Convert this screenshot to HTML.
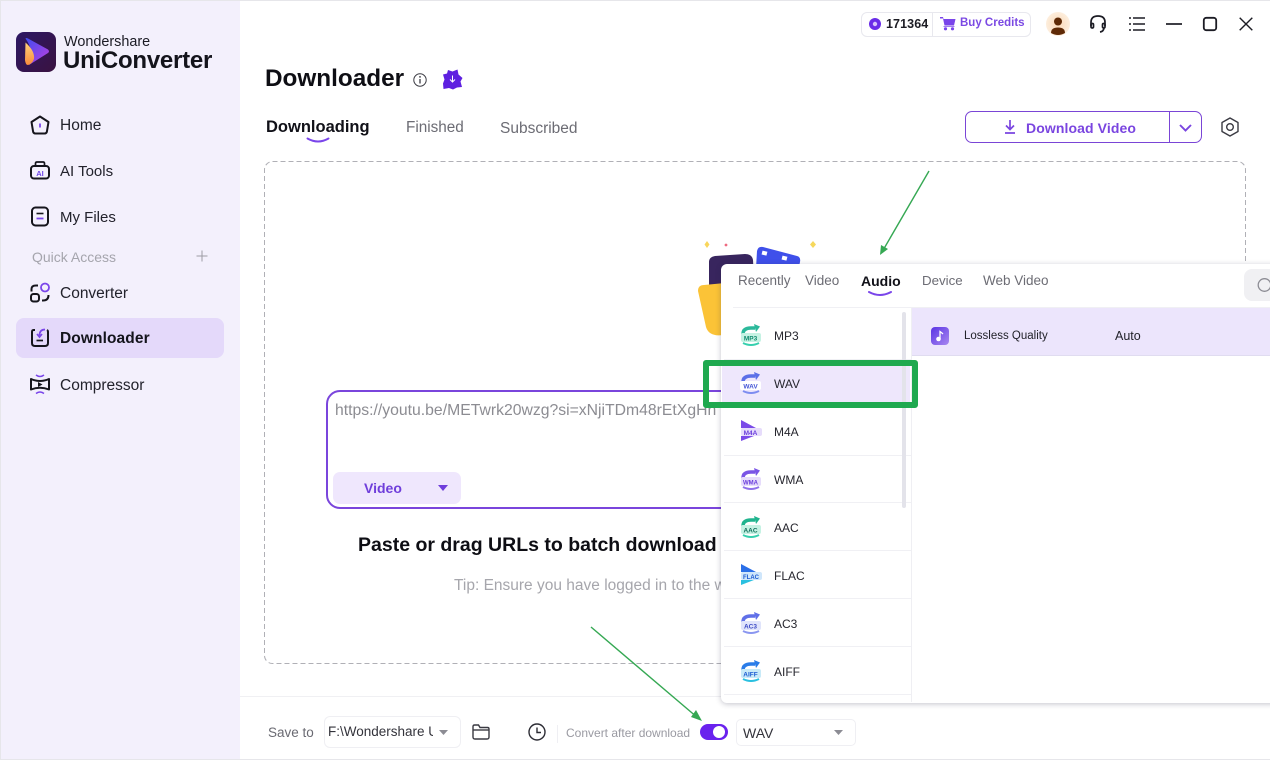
<!DOCTYPE html>
<html>
<head>
<meta charset="utf-8">
<style>
html,body{margin:0;padding:0;width:1270px;height:760px;overflow:hidden;background:#fff}
body{font-family:"Liberation Sans","Noto Sans CJK SC",sans-serif;color:#1b1b24;position:relative}
.t{position:absolute;white-space:nowrap;line-height:20px}
.a{position:absolute}
svg{position:absolute;overflow:visible}
.nav{font-size:15.5px;color:#22222c}
.fmt{font-size:12px;color:#26262e;left:774px}
.sep{position:absolute;left:724px;width:187px;height:1px;background:#f0f0f4}
</style>
</head>
<body>
<!-- sidebar -->
<div class="a" style="left:0;top:0;width:240px;height:760px;background:#f3f0fc"></div>
<div class="a" style="left:0;top:0;width:1270px;height:1px;background:#e6e6ea"></div>
<div class="a" style="left:0;top:0;width:1px;height:760px;background:#e6e6ea"></div>
<div class="a" style="left:0;top:759px;width:1270px;height:1px;background:#e6e6ea"></div>

<!-- logo -->
<svg style="left:16px;top:32px" width="40" height="40" viewBox="0 0 40 40">
<defs>
<linearGradient id="lb" x1="0" y1="0" x2="1" y2="1"><stop offset="0" stop-color="#2c1764"/><stop offset="1" stop-color="#3a1240"/></linearGradient>
<linearGradient id="lp" x1="0" y1="0" x2="1" y2="1"><stop offset="0" stop-color="#3f4cf0"/><stop offset="1" stop-color="#c040e0"/></linearGradient>
<linearGradient id="lo" x1="0" y1="0" x2="0" y2="1"><stop offset="0" stop-color="#ffd27a"/><stop offset="1" stop-color="#f98a3c"/></linearGradient>
</defs>
<rect width="40" height="40" rx="8" fill="url(#lb)"/>
<path d="M9.500 6.500Q10 5.500 12 6.500L32 17.500Q34 19.500 32 21L13 33Q19 20 9.500 6.500Z" fill="url(#lp)"/>
<path d="M9.500 10.500Q19 19 18 27Q16 32 12 33Q9.500 33 9 28Z" fill="url(#lo)"/>
</svg>
<div class="t" style="left:64px;top:31px;font-size:14.400px;color:#1b1b24;margin-top:1px">Wondershare</div>
<div class="t" style="left:63px;top:51px;font-size:24px;font-weight:700;color:#14141c;letter-spacing:-.25px">UniConverter</div>

<!-- nav icons -->
<svg style="left:30px;top:115px" width="20" height="20" viewBox="0 0 20 20" fill="none">
<path d="M10 1.500 L18.500 7 L17 16 Q16.800 18.500 14.500 18.500 H5.500 Q3.200 18.500 3 16 L1.500 7Z" stroke="#15151c" stroke-width="2" stroke-linejoin="round"/>
<path d="M10 8.500V12.500" stroke="#7a45ea" stroke-width="1.800"/>
</svg>
<div class="t nav" style="left:60px;top:116px">Home</div>

<svg style="left:30px;top:160px" width="20" height="20" viewBox="0 0 20 20" fill="none">
<rect x="1" y="6" width="18" height="12.500" rx="3" stroke="#15151c" stroke-width="2"/>
<path d="M5.500 6V3.500Q5.500 2 7 2H13Q14.500 2 14.500 3.500V6" stroke="#15151c" stroke-width="1.700"/>
<text x="10" y="16" text-anchor="middle" font-size="7.500" font-weight="700" fill="#6e44e6" font-family="Liberation Sans">AI</text>
</svg>
<div class="t nav" style="left:60px;top:162px;font-size:15px">AI Tools</div>

<svg style="left:30px;top:206px" width="20" height="20" viewBox="0 0 20 20" fill="none">
<rect x="2" y="1.500" width="16" height="18" rx="3.500" stroke="#15151c" stroke-width="2"/>
<path d="M6.500 7.500H13.500" stroke="#15151c" stroke-width="1.600"/>
<path d="M6.500 12.500H13.500" stroke="#7a45ea" stroke-width="1.800"/>
</svg>
<div class="t nav" style="left:60px;top:208px;font-size:15px">My Files</div>

<div class="t" style="left:32px;top:247px;font-size:14px;color:#a5a5ad">Quick Access</div>
<svg style="left:196px;top:250px" width="12" height="12" viewBox="0 0 12 12" fill="none"><path d="M6 .5V11.500M.5 6H11.500" stroke="#9c9ca4" stroke-width="1"/></svg>

<svg style="left:30px;top:282px" width="21" height="21" viewBox="0 0 21 21" fill="none">
<circle cx="15" cy="5.500" r="4" stroke="#7a45ea" stroke-width="1.800"/>
<rect x="1" y="12" width="8" height="7.500" rx="2.500" stroke="#15151c" stroke-width="2"/>
<path d="M1.500 9.500V7Q1.500 3.500 6 3.500H8" stroke="#15151c" stroke-width="2"/>
<path d="M18.500 13Q18.500 18.500 13 18.500H12" stroke="#15151c" stroke-width="2"/>
</svg>
<div class="t nav" style="left:60px;top:284px">Converter</div>

<div class="a" style="left:16px;top:318px;width:208px;height:40px;background:#e4d9fa;border-radius:8px"></div>
<svg style="left:30px;top:328px" width="20" height="20" viewBox="0 0 20 20" fill="none">
<path d="M5 2H3.500Q2 2 2 4V15Q2 18 5 18H15Q18 18 18 15V4Q18 2.500 17 2" stroke="#15151c" stroke-width="2"/>
<path d="M15 1.500Q9.500 1.500 9.500 7.500" stroke="#7a45ea" stroke-width="1.700"/>
<path d="M7 6L9.500 9L12 6" stroke="#7a45ea" stroke-width="1.700"/>
<path d="M6.500 12.500H13" stroke="#15151c" stroke-width="1.700"/>
</svg>
<div class="t" style="left:60px;top:329px;font-size:15.500px;font-weight:700;color:#14141c;letter-spacing:.1px">Downloader</div>

<svg style="left:30px;top:374px" width="20" height="21" viewBox="0 0 20 21" fill="none">
<path d="M1 5Q10 9 19 5V15.500Q10 12 1 15.500Z" stroke="#15151c" stroke-width="2" stroke-linejoin="round"/>
<path d="M8 8L12.500 10.500L8 13Z" fill="#15151c"/>
<path d="M6 1Q10 4 14 1M6 19.500Q10 16.500 14 19.500" stroke="#7a45ea" stroke-width="1.500"/>
</svg>
<div class="t nav" style="left:60px;top:376px">Compressor</div>

<!-- top bar -->
<div class="a" style="left:861px;top:12px;width:168px;height:23px;border:1px solid #e8e8ee;border-radius:6px"></div>
<div class="a" style="left:932px;top:13px;width:1px;height:23px;background:#e8e8ee"></div>
<svg style="left:869px;top:18px" width="12" height="12" viewBox="0 0 12 12"><circle cx="6" cy="6" r="6" fill="#6a2de8"/><circle cx="6" cy="6" r="2.200" fill="#d8c4fb"/></svg>
<div class="t" style="left:886px;top:14px;font-size:12.500px;font-weight:700;color:#1c1c24;letter-spacing:.1px">171364</div>
<svg style="left:940px;top:16px" width="16" height="15" viewBox="0 0 16 15" fill="#7a45ea">
<path d="M0 1H3L3.500 3H15.500L14 9.500H4.500L3 2.500H0Z"/><circle cx="5.500" cy="12.800" r="1.600"/><circle cx="12.500" cy="12.800" r="1.600"/><path d="M3.500 10.300H14.500V11H3.500Z"/>
</svg>
<div class="t" style="left:960px;top:13px;font-size:11.500px;font-weight:700;color:#7b49e3">Buy Credits</div>

<svg style="left:1046px;top:12px" width="24" height="24" viewBox="0 0 24 24">
<defs><radialGradient id="av"><stop offset="0" stop-color="#fbd9b8"/><stop offset="1" stop-color="#fdeedd"/></radialGradient></defs>
<circle cx="12" cy="12" r="12" fill="url(#av)"/><circle cx="12" cy="9.500" r="4" fill="#5f2a06"/><path d="M5 21Q5 15.500 12 15.500Q19 15.500 19 21Q12 25 5 21Z" fill="#5f2a06"/>
</svg>

<svg style="left:1090px;top:15px" width="16" height="18" viewBox="0 0 16 18" fill="none" stroke="#1c1c24" stroke-width="1.700">
<path d="M1 11V7.500Q1 1 8 1Q15 1 15 7.500V11"/><rect x="1" y="8.500" width="2.500" height="4.500" rx="1.200"/><rect x="12.500" y="8.500" width="2.500" height="4.500" rx="1.200"/><path d="M14 13Q13.500 16.500 10 17"/>
</svg>
<svg style="left:1129px;top:16px" width="16" height="16" viewBox="0 0 16 16" fill="none" stroke="#1c1c24" stroke-width="1.500">
<path d="M4 2H16M4 8H16M4 14H16"/><path d="M0 2H2M0 8H2M0 14H2"/>
</svg>
<svg style="left:1166px;top:23px" width="16" height="2" viewBox="0 0 16 2"><path d="M0 1H16" stroke="#1c1c24" stroke-width="1.700"/></svg>
<svg style="left:1203px;top:17px" width="14" height="14" viewBox="0 0 14 14" fill="none"><rect x=".8" y=".8" width="12.400" height="12.400" rx="2.500" stroke="#1c1c24" stroke-width="1.800"/></svg>
<svg style="left:1239px;top:17px" width="14" height="14" viewBox="0 0 14 14" fill="none"><path d="M.7 .7L13.300 13.300M13.300 .7L.7 13.300" stroke="#1c1c24" stroke-width="1.400"/></svg>

<!-- title -->
<div class="t" style="left:265px;top:67px;font-size:24.300px;line-height:24px;font-weight:700;color:#0e0e14">Downloader</div>
<svg style="left:413px;top:73px" width="14" height="14" viewBox="0 0 14 14" fill="none"><circle cx="7" cy="7" r="6.200" stroke="#3c3c44" stroke-width="1"/><path d="M7 6V10.500" stroke="#3c3c44" stroke-width="1.300"/><circle cx="7" cy="3.900" r=".9" fill="#3c3c44"/></svg>
<svg style="left:442px;top:69px" width="21" height="21" viewBox="0 0 21 21">
<path d="M6 1L10.500 2.500L15.500 0.500L16.500 5.500L20.500 9L18.500 12.500L20 18L15 18.500L11 20.500L7 19L1.500 20L1 14.500L2.500 10.500L1 5.500L5 4.500Z" fill="#5e20e0"/>
<path d="M10.500 6.500V13M8 10.500L10.500 13L13 10.500" stroke="#fff" stroke-width="1" fill="none"/>
</svg>

<!-- tabs -->
<div class="t" style="left:266px;top:117px;font-size:16.500px;font-weight:700;color:#111118">Downloading</div>
<svg style="left:306px;top:137px" width="24" height="7" viewBox="0 0 24 7" fill="none"><path d="M1.500 1.500Q12 7.500 22.500 1.500" stroke="#7a45ea" stroke-width="2" stroke-linecap="round"/></svg>
<div class="t" style="left:406px;top:118px;font-size:15.300px;color:#6c6c74">Finished</div>
<div class="t" style="left:500px;top:119px;font-size:15.500px;color:#6c6c74">Subscribed</div>

<!-- download btn -->
<div class="a" style="left:965px;top:111px;width:235px;height:30px;border:1px solid #7a45d6;border-radius:7px"></div>
<div class="a" style="left:1169px;top:112px;width:1px;height:30px;background:#7a45d6"></div>
<svg style="left:1004px;top:120px" width="12" height="14" viewBox="0 0 12 14" fill="none" stroke="#7a45e0" stroke-width="1.700"><path d="M6 0V9M2 5.500L6 9.500L10 5.500M1 13H11"/></svg>
<div class="t" style="left:1026px;top:118px;font-size:14px;font-weight:700;color:#7a45e0;letter-spacing:.1px">Download Video</div>
<svg style="left:1179px;top:124px" width="13" height="8" viewBox="0 0 13 8" fill="none"><path d="M1 1L6.500 6.500L12 1" stroke="#7a45e0" stroke-width="1.900"/></svg>
<svg style="left:1221px;top:117px" width="18" height="20" viewBox="0 0 18 20" fill="none" stroke="#3a3a42" stroke-width="1.400"><path d="M9 1L17 5.500V14.500L9 19L1 14.500V5.500Z" stroke-linejoin="round"/><circle cx="9" cy="10" r="3.300"/></svg>

<!-- dashed area -->
<svg style="left:264px;top:161px" width="982" height="503" viewBox="0 0 982 503" fill="none"><rect x=".5" y=".5" width="981" height="502" rx="8" stroke="#b0b0b6" stroke-width="1" stroke-dasharray="5 3"/></svg>

<!-- illustration -->
<svg style="left:695px;top:236px" width="130" height="110" viewBox="0 0 130 110">
<path d="M12 5L14.500 8.500L12 12L9.500 8.500Z" fill="#f9d65b"/>
<circle cx="31" cy="9" r="1.400" fill="#ee6a80"/>
<path d="M118 5L121 8.500L118 12L115 8.500Z" fill="#f6d85c"/>
<path d="M62 15Q63 10 68 11L102 20Q106 21 105 26L100 50H60Z" fill="#3f50ea"/>
<rect x="67" y="15" width="5" height="4" fill="#fff" transform="rotate(14 69 17)"/>
<rect x="87" y="20" width="5" height="4" fill="#fff" transform="rotate(14 89 22)"/>
<path d="M14 26Q14 21 20 20L50 18Q57 18 58 24L60 60H14Z" fill="#38255e"/>
<path d="M3 55Q3 49 9 49L30 47L28 99Q14 101 11 91Z" fill="#fbc337"/>
</svg>

<!-- url input -->
<div class="a" style="left:326px;top:390px;width:500px;height:115px;border:2px solid #7a45dc;border-radius:14px"></div>
<div class="t" style="left:335px;top:401px;font-size:15.750px;color:#8c8c92;width:382px;overflow:hidden">https://youtu.be/METwrk20wzg?si=xNjiTDm48rEtXgHn</div>
<div class="a" style="left:333px;top:472px;width:128px;height:32px;background:#efe7fd;border-radius:7px"></div>
<div class="t" style="left:364px;top:478px;font-size:14px;font-weight:700;color:#6f3edb">Video</div>
<svg style="left:438px;top:485px" width="10" height="6" viewBox="0 0 10 6"><path d="M0 0H10L5 6Z" fill="#6f3edb"/></svg>

<div class="t" style="left:358px;top:534px;font-size:19.500px;line-height:22px;font-weight:700;color:#0e0e14">Paste or drag URLs to batch download</div>
<div class="t" style="left:454px;top:576px;font-size:15.500px;color:#a6a6ac">Tip: Ensure you have logged in to the w</div>

<!-- bottom bar -->
<div class="a" style="left:240px;top:696px;width:1030px;height:1px;background:#f0f0f3"></div>
<div class="t" style="left:268px;top:723px;font-size:13.500px;color:#6a6a72">Save to</div>
<div class="a" style="left:324px;top:716px;width:135px;height:30px;border:1px solid #efeff3;border-radius:6px"></div>
<div class="t" style="left:328px;top:722px;font-size:13.500px;color:#33333b;width:105px;overflow:hidden">F:\Wondershare UniConverter</div>
<svg style="left:439px;top:730px" width="9" height="5" viewBox="0 0 9 5"><path d="M0 0H9L4.500 5Z" fill="#8c8c94"/></svg>
<svg style="left:472px;top:724px" width="18" height="16" viewBox="0 0 18 16" fill="none" stroke="#3a3a42" stroke-width="1.400"><path d="M1 13V2.500Q1 1 2.500 1H6.500L8 3.500H15.500Q17 3.500 17 5V13Q17 15 15 15H3Q1 15 1 13Z"/><path d="M1 6H17"/></svg>
<svg style="left:528px;top:723px" width="18" height="18" viewBox="0 0 18 18" fill="none" stroke="#2c2c34" stroke-width="1.400"><circle cx="9" cy="9" r="8"/><path d="M9 4.500V9.500H13"/></svg>
<div class="a" style="left:557px;top:725px;width:1px;height:18px;background:#efeff3"></div>
<div class="t" style="left:566px;top:723px;font-size:12px;color:#9a9aa2">Convert after download</div>
<div class="a" style="left:700px;top:724px;width:28px;height:16px;background:#6a22ee;border-radius:8px"></div>
<div class="a" style="left:713px;top:726px;width:12px;height:12px;background:#fff;border-radius:50%"></div>
<div class="a" style="left:736px;top:719px;width:118px;height:25px;border:1px solid #efeff3;border-radius:5px"></div>
<div class="t" style="left:743px;top:723px;font-size:14px;color:#33333b">WAV</div>
<svg style="left:834px;top:730px" width="9" height="5" viewBox="0 0 9 5"><path d="M0 0H9L4.500 5Z" fill="#8c8c94"/></svg>

<!-- popup -->
<div class="a" style="left:721px;top:264px;width:600px;height:439px;background:#fff;border-radius:6px;box-shadow:0 1px 6px rgba(40,40,70,.28)"></div>
<div class="t" style="left:738px;top:271px;font-size:13.500px;color:#6c6c74">Recently</div>
<div class="t" style="left:805px;top:271px;font-size:13.500px;color:#6c6c74">Video</div>
<div class="t" style="left:861px;top:271px;font-size:14px;font-weight:700;color:#111118">Audio</div>
<svg style="left:867px;top:290px" width="26" height="8" viewBox="0 0 26 8" fill="none"><path d="M2 2Q13 8 24 2" stroke="#7a45ea" stroke-width="2" stroke-linecap="round"/></svg>
<div class="t" style="left:922px;top:271px;font-size:13.300px;color:#6c6c74">Device</div>
<div class="t" style="left:983px;top:271px;font-size:13.500px;color:#6c6c74">Web Video</div>
<div class="a" style="left:1244px;top:269px;width:40px;height:32px;background:#f0f0f3;border-radius:8px"></div>
<svg style="left:1257px;top:278px" width="16" height="16" viewBox="0 0 16 16" fill="none"><circle cx="7.500" cy="7" r="6.300" stroke="#8c8c94" stroke-width="1.300"/></svg>
<div class="a" style="left:733px;top:307px;width:537px;height:1px;background:#f0f0f4"></div>
<div class="a" style="left:911px;top:308px;width:1px;height:394px;background:#efeff3"></div>

<!-- right pane row -->
<div class="a" style="left:912px;top:308px;width:358px;height:47px;background:#ece5fc"></div>
<div class="a" style="left:912px;top:355px;width:358px;height:1px;background:#e0dcf0"></div>
<svg style="left:931px;top:327px" width="18" height="18" viewBox="0 0 18 18">
<defs><linearGradient id="mu" x1="0" y1="0" x2="1" y2="1"><stop offset="0" stop-color="#5a34e4"/><stop offset="1" stop-color="#a888f0"/></linearGradient></defs>
<rect width="18" height="18" rx="4" fill="url(#mu)"/><circle cx="7.500" cy="12" r="2.300" fill="#fff"/><path d="M9 12V4.500Q11 6 12 7" stroke="#fff" stroke-width="1.300" fill="none"/>
</svg>
<div class="t" style="left:964px;top:326px;font-size:11.500px;color:#22222a">Lossless Quality</div>
<div class="t" style="left:1115px;top:326px;font-size:12.500px;color:#22222a">Auto</div>

<!-- format list -->
<div class="a" style="left:722px;top:360px;width:188px;height:47px;background:#eee7fc"></div>
<div class="sep" style="top:359px"></div><div class="sep" style="top:407px"></div><div class="sep" style="top:455px"></div><div class="sep" style="top:502px"></div><div class="sep" style="top:550px"></div><div class="sep" style="top:598px"></div><div class="sep" style="top:646px"></div><div class="sep" style="top:694px"></div>
<div class="a" style="left:902px;top:312px;width:4px;height:196px;background:#e3e3ea;border-radius:2px"></div>

<!-- icons -->
<svg style="left:740px;top:323px" width="22" height="24" viewBox="0 0 22 24" fill="none"><path d="M3 11Q3 5 11 5L15 5" stroke="#2bb99b" stroke-width="3.500"/><path d="M14 1L20 3.500L16 9Z" fill="#2bb99b"/><rect x="1" y="10" width="20" height="9" rx="2" fill="#c5f2e3"/><text x="10.500" y="17.500" text-anchor="middle" font-size="6.500" font-weight="700" fill="#0e8a6e" font-family="Liberation Sans">MP3</text><path d="M3 20Q11 24 19 20" stroke="#36d0ae" stroke-width="2"/></svg>
<div class="t fmt" style="top:326px">MP3</div>

<svg style="left:740px;top:371px" width="22" height="24" viewBox="0 0 22 24" fill="none"><path d="M3 11Q3 5 11 5L15 5" stroke="#5b6fe8" stroke-width="3.500"/><path d="M14 1L20 3.500L16 9Z" fill="#5b6fe8"/><rect x="0" y="10" width="21" height="9" rx="2" fill="#fff"/><text x="10.500" y="17.500" text-anchor="middle" font-size="6.500" font-weight="700" fill="#4556d6" font-family="Liberation Sans">WAV</text><path d="M3 20Q11 24 19 20" stroke="#7d8cf0" stroke-width="2"/></svg>
<div class="t fmt" style="top:374px">WAV</div>

<svg style="left:740px;top:419px" width="22" height="24" viewBox="0 0 22 24" fill="none"><path d="M1 1L16 9H1Z" fill="#7a4ae8"/><path d="M1 22L14 17H1Z" fill="#7a4ae8"/><rect x="1" y="9" width="21" height="8" rx="2" fill="#e6dcfb"/><text x="10.500" y="15.800" text-anchor="middle" font-size="6.500" font-weight="700" fill="#6a3ddc" font-family="Liberation Sans">M4A</text></svg>
<div class="t fmt" style="top:422px">M4A</div>

<svg style="left:740px;top:467px" width="22" height="24" viewBox="0 0 22 24" fill="none"><path d="M3 11Q3 5 11 5L15 5" stroke="#7a55e6" stroke-width="3.500"/><path d="M14 1L20 3.500L16 9Z" fill="#7a55e6"/><rect x="1" y="10" width="20" height="9" rx="2" fill="#e6dcfb"/><text x="10.500" y="17.500" text-anchor="middle" font-size="6" font-weight="700" fill="#6a3ddc" font-family="Liberation Sans">WMA</text><path d="M3 20Q11 24 19 20" stroke="#8f70ea" stroke-width="2"/></svg>
<div class="t fmt" style="top:470px">WMA</div>

<svg style="left:740px;top:515px" width="22" height="24" viewBox="0 0 22 24" fill="none"><path d="M3 11Q3 5 11 5L15 5" stroke="#20b48e" stroke-width="3.500"/><path d="M14 1L20 3.500L16 9Z" fill="#20b48e"/><rect x="1" y="10" width="20" height="9" rx="2" fill="#c5f2e3"/><text x="10.500" y="17.500" text-anchor="middle" font-size="6.500" font-weight="700" fill="#0e6e5a" font-family="Liberation Sans">AAC</text><path d="M3 20Q11 24 19 20" stroke="#36d0ae" stroke-width="2"/></svg>
<div class="t fmt" style="top:518px">AAC</div>

<svg style="left:740px;top:563px" width="22" height="24" viewBox="0 0 22 24" fill="none"><path d="M1 1L16 9H1Z" fill="#2a6fe8"/><path d="M1 22L14 17H1Z" fill="#2bc0e0"/><rect x="1" y="9" width="21" height="8" rx="2" fill="#cfe6fb"/><text x="11" y="15.800" text-anchor="middle" font-size="6" font-weight="700" fill="#1b5ad2" font-family="Liberation Sans">FLAC</text></svg>
<div class="t fmt" style="top:566px">FLAC</div>

<svg style="left:740px;top:611px" width="22" height="24" viewBox="0 0 22 24" fill="none"><path d="M3 11Q3 5 11 5L15 5" stroke="#6070e8" stroke-width="3.500"/><path d="M14 1L20 3.500L16 9Z" fill="#6070e8"/><rect x="1" y="10" width="20" height="9" rx="2" fill="#e0e4fb"/><text x="10.500" y="17.500" text-anchor="middle" font-size="6.500" font-weight="700" fill="#3a48c4" font-family="Liberation Sans">AC3</text><path d="M3 20Q11 24 19 20" stroke="#8a96f0" stroke-width="2"/></svg>
<div class="t fmt" style="top:614px">AC3</div>

<svg style="left:740px;top:659px" width="22" height="24" viewBox="0 0 22 24" fill="none"><path d="M3 11Q3 5 11 5L15 5" stroke="#2a7ce8" stroke-width="3.500"/><path d="M14 1L20 3.500L16 9Z" fill="#2a7ce8"/><rect x="1" y="10" width="20" height="9" rx="2" fill="#c8eaf8"/><text x="10.500" y="17.500" text-anchor="middle" font-size="6.500" font-weight="700" fill="#1b5ad2" font-family="Liberation Sans">AIFF</text><path d="M3 20Q11 24 19 20" stroke="#2bc0e0" stroke-width="2"/></svg>
<div class="t fmt" style="top:662px">AIFF</div>

<!-- green highlight -->
<div class="a" style="left:703px;top:360px;width:203px;height:36px;border:6px solid #1fa94f;border-radius:3px;box-sizing:content-box"></div>

<!-- arrows -->
<svg style="left:0;top:0" width="1270" height="760" viewBox="0 0 1270 760" fill="none">
<path d="M929 171L882 252" stroke="#35a853" stroke-width="1.400"/>
<path d="M880 255L881 245L888 249Z" fill="#35a853"/>
<path d="M591 627L698 718" stroke="#35a853" stroke-width="1.400"/>
<path d="M702 721L691 717L696 710Z" fill="#35a853"/>
</svg>
</body>
</html>
